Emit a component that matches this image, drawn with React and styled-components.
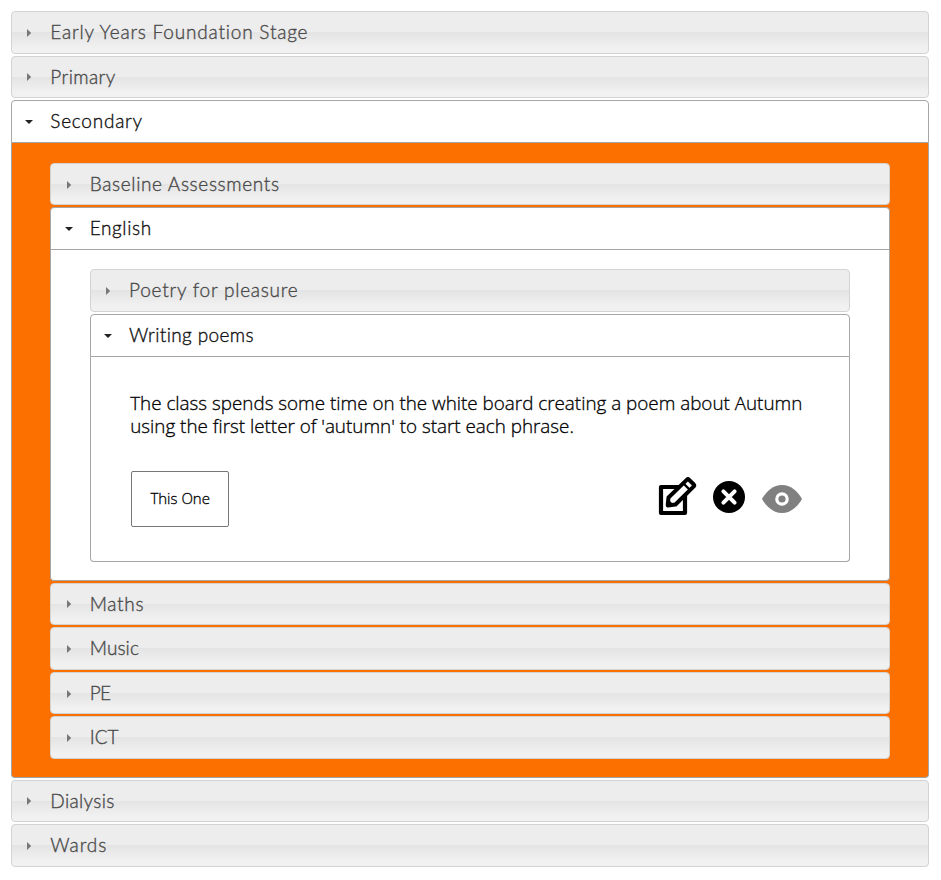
import React from 'react';
import styled, { createGlobalStyle } from 'styled-components';

const GlobalStyle = createGlobalStyle`
  * { box-sizing: border-box; }
  body { margin: 0; background: #fff; }
`;

const Page = styled.main`
  width: 941px;
  height: 880px;
  padding: 11px 12px 0 11px;
`;

const Accordion = styled.div`
  display: flex;
  flex-direction: column;
  gap: 2px;
`;

const Header = styled.button`
  display: flex;
  align-items: center;
  width: 100%;
  height: 42.6px;
  padding: 0 0 1px 14px;
  border: 1px solid ${(p) => (p.$open ? '#a6a6a6' : '#d3d3d3')};
  border-radius: ${(p) => (p.$open ? '4px 4px 0 0' : '4px')};
  background: ${(p) =>
    p.$open
      ? '#fff'
      : 'linear-gradient(#ededed 0, #ededed 49%, #e4e4e4 50%, #f1f1f1 88%, #f1f1f1 100%)'};
  color: ${(p) => (p.$open ? '#111' : '#4a4a4a')};
  text-align: left;
  cursor: pointer;
`;

const Arrow = styled.svg`
  display: block;
  flex: none;
  width: 8px;
  height: 8px;
  margin: 2px 17px 0 -0.7px;
  fill: ${(p) => (p.$open ? '#222' : '#777')};
`;

const Label = styled.span`
  padding-top: 0.6px;
  font: 300 19px/24px Lato, sans-serif;
  letter-spacing: ${(p) => p.$tracking}px;
  -webkit-text-stroke: 0.35px currentColor;
  white-space: nowrap;
`;

const Panel = styled.div`
  padding: ${(p) => p.$top}px 38.4px 17.6px;
  border: 1px solid #a6a6a6;
  border-top: 0;
  border-radius: 0 0 4px 4px;
  background: ${(p) => (p.$accent ? '#fc7000' : '#fff')};
`;

const Lesson = styled.div`
  height: 205.4px;
  padding: 35px 38.4px 0 39.4px;
  border: 1px solid #a6a6a6;
  border-top: 0;
  border-radius: 0 0 4px 4px;
  font-family: 'Open Sans', sans-serif;
  font-weight: 300;
  color: #000;
`;

const Description = styled.p`
  margin: 0;
  font-size: 18.84px;
  line-height: 23px;
  white-space: nowrap;
  -webkit-text-stroke: 0.3px currentColor;
`;

const Actions = styled.div`
  display: flex;
  align-items: flex-start;
  justify-content: space-between;
  margin-top: 33px;
`;

const ChoiceButton = styled.button`
  width: 98px;
  height: 56px;
  margin-left: 1px;
  padding: 0 0 2px;
  border: 1px solid #777;
  border-radius: 2px;
  background: #fff;
  color: #000;
  font: 300 15px 'Open Sans', sans-serif;
  -webkit-text-stroke: 0.3px currentColor;
`;

const Tools = styled.div`
  display: flex;
  align-items: flex-start;
  margin-right: 9.2px;
  padding-top: 5px;
`;

const Icon = styled.svg`
  display: block;
  width: ${(p) => p.$w}px;
  height: 40px;
  margin-left: ${(p) => p.$gap || 0}px;
`;

function Section({ title, tracking, open, children }) {
  return (
    <div>
      <Header $open={open} aria-expanded={!!open}>
        <Arrow $open={open} viewBox="0 0 8 8">
          <path d={open ? 'M0 2H8L4 6Z' : 'M2 0V8L6.2 4Z'} />
        </Arrow>
        <Label $tracking={tracking}>{title}</Label>
      </Header>
      {children}
    </div>
  );
}

function EditIcon() {
  return (
    <Icon $w={40} viewBox="0 0 40 40">
      <path d="M4 11H28V37H4Z" fill="#fff" stroke="#000" strokeWidth="4.2" strokeLinejoin="round" />
      <path d="M10.800 28L11.500 21.500L30 3.600Q31 2.700 31.900 3.600L36.800 8.500Q37.600 9.400 36.800 10.300L18.500 28.500L10.800 29.500Z" fill="#fff" stroke="#000" strokeWidth="4" strokeLinejoin="round" />
      <path d="M26.500 7.500L33 14" stroke="#000" strokeWidth="2.400" />
      <path d="M11 23L17.500 29.500H11Z" />
    </Icon>
  );
}

function CloseIcon() {
  return (
    <Icon $w={32} $gap={16} viewBox="0 0 32 40">
      <circle cx="16" cy="21" r="16" />
      <path d="M10.400 15.400L21.600 26.600M21.600 15.400L10.400 26.600" stroke="#fff" strokeWidth="4" strokeLinecap="round" />
    </Icon>
  );
}

function EyeIcon() {
  return (
    <Icon $w={40} $gap={17} viewBox="0 0 40 40">
      <path d="M0 23C4.500 15 11.500 9 20 9S35.500 15 40 23C35.500 31 28.500 37 20 37S4.500 31 0 23Z" fill="#808080" />
      <circle cx="20" cy="23" r="5.200" fill="none" stroke="#fff" strokeWidth="3.200" />
    </Icon>
  );
}

export default function App() {
  return (
    <>
      <GlobalStyle />
      <Page>
        <Accordion>
          <Section title="Early Years Foundation Stage" tracking={0.8} />
          <Section title="Primary" tracking={0.42} />
          <Section title="Secondary" tracking={0.76} open>
            <Panel $top={20} $accent>
              <Accordion>
                <Section title="Baseline Assessments" tracking={0.64} />
                <Section title="English" tracking={0.6} open>
                  <Panel $top={19.4}>
                    <Accordion>
                      <Section title="Poetry for pleasure" tracking={0.76} />
                      <Section title="Writing poems" tracking={0.38} open>
                        <Lesson>
                          <Description>
                            The class spends some time on the white board creating a poem about Autumn
                            <br />
                            using the first letter of 'autumn' to start each phrase.
                          </Description>
                          <Actions>
                            <ChoiceButton>This One</ChoiceButton>
                            <Tools>
                              <EditIcon />
                              <CloseIcon />
                              <EyeIcon />
                            </Tools>
                          </Actions>
                        </Lesson>
                      </Section>
                    </Accordion>
                  </Panel>
                </Section>
                <Section title="Maths" tracking={0.7} />
                <Section title="Music" tracking={0.1} />
                <Section title="PE" tracking={-0.8} />
                <Section title="ICT" tracking={0} />
              </Accordion>
            </Panel>
          </Section>
          <Section title="Dialysis" tracking={0.35} />
          <Section title="Wards" tracking={0.9} />
        </Accordion>
      </Page>
    </>
  );
}
